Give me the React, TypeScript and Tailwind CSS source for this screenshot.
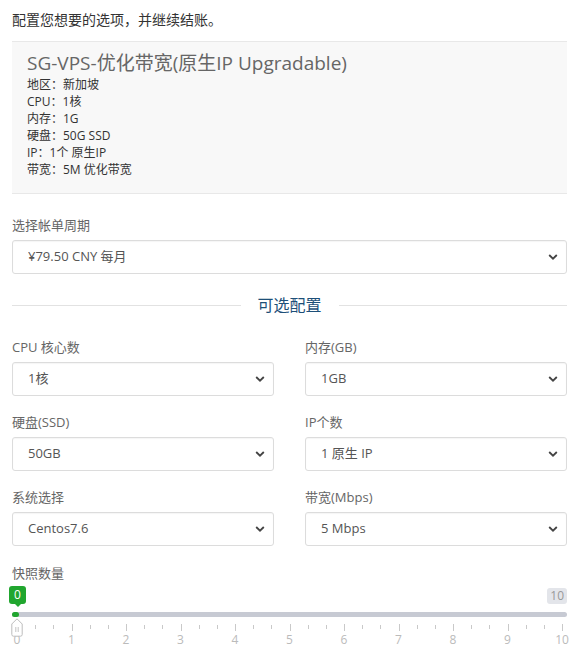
import React, { useState } from "react";

const FONT = {
  fontFamily:
    '"Open Sans", "Noto Sans CJK SC", "Noto Sans", sans-serif',
};

const Chevron = () => (
  <svg
    width="10"
    height="7"
    viewBox="0 0 10 7"
    className="absolute right-[9px] top-1/2 -translate-y-1/2 pointer-events-none"
  >
    <path d="M1.2 1.5 L5 5.2 L8.8 1.5" fill="none" stroke="#444" strokeWidth="1.8" />
  </svg>
);

const SelectBox = ({ value, options }: { value: string; options: string[] }) => {
  const [current, setCurrent] = useState(value);

  return (
    <div className="relative w-full">
      <select
        value={current}
        onChange={(e) => setCurrent(e.target.value)}
        className="appearance-none w-full h-[34px] bg-white border border-[#dcdcdc] rounded-[3px] pl-[15px] pr-8 text-[13px] text-[#555] shadow-[inset_0_1px_1px_rgba(0,0,0,0.04)] outline-none"
        style={FONT}
      >
        {options.map((o) => (
          <option key={o} value={o}>
            {o}
          </option>
        ))}
      </select>
      <Chevron />
    </div>
  );
};

const Field = ({
  label,
  value,
  options,
}: {
  label: string;
  value: string;
  options: string[];
}) => (
  <div className="flex flex-col">
    <div className="h-[18px] leading-[18px] text-[13px] text-[#666] mb-[6px]">
      {label}
    </div>
    <SelectBox value={value} options={options} />
  </div>
);

const SnapshotSlider = () => {
  const max = 10;
  const ticks = Array.from({ length: max * 3 + 1 }, (_, i) => i);

  return (
    <div className="relative h-[77px] w-full">
      {/* value badge */}
      <div className="absolute left-[-3px] top-[4px] flex flex-col items-center">
        <div className="bg-[#21a62f] text-white text-[12px] leading-[18px] w-[17px] text-center rounded-[3px]">
          0
        </div>
        <div className="w-0 h-0 border-l-[3px] border-r-[3px] border-t-[3px] border-l-transparent border-r-transparent border-t-[#21a62f]" />
      </div>
      {/* max badge */}
      <div className="absolute right-0 top-[6px] bg-[#e3e5ea] text-[#999] text-[12px] leading-[16px] px-[3px] rounded-[3px]">
        10
      </div>
      {/* track */}
      <div className="absolute left-0 right-0 top-[30px] h-[5px] rounded-full bg-[#c7cad3]" />
      <div className="absolute left-0 top-[30px] h-[5px] w-[7px] rounded-full bg-[#21a62f]" />
      {/* ticks */}
      <div className="absolute left-[5px] right-[5px] top-[42px] h-[30px]">
        {ticks.map((t) => {
          const major = t % 3 === 0;
          return (
            <div
              key={t}
              className={`absolute w-px bg-[#c9c9c9] ${
                major ? "top-0 h-[7px]" : "top-[1px] h-[4px]"
              }`}
              style={{ left: `${(t / (ticks.length - 1)) * 100}%` }}
            />
          );
        })}
        {Array.from({ length: max + 1 }, (_, i) => i).map((n) => (
          <div
            key={n}
            className="absolute top-[8px] text-[12px] leading-[16px] text-[#bbb] -translate-x-1/2"
            style={{ left: `${(n / max) * 100}%` }}
          >
            {n}
          </div>
        ))}
      </div>
      {/* handle */}
      <svg
        width="12"
        height="19"
        viewBox="0 0 12 19"
        className="absolute left-[-1px] top-[36px]"
      >
        <path
          d="M6 0.8 L11.2 6 L11.2 16.5 Q11.2 18.2 9.5 18.2 L2.5 18.2 Q0.8 18.2 0.8 16.5 L0.8 6 Z"
          fill="#fff"
          stroke="#bdbdbd"
          strokeWidth="1"
        />
        <path d="M4.8 9 V14 M7.2 9 V14" stroke="#c4c4c4" strokeWidth="1" />
      </svg>
    </div>
  );
};

const App = () => {
  return (
    <div
      className="bg-white w-[585px] min-h-[659px] pl-[12px] pr-[18px] pt-[10px] text-[#333]"
      style={FONT}
    >
      <div className="text-[14px] leading-[20px] text-[#333]">
        配置您想要的选项，并继续结账。
      </div>

      <div className="mt-[11px] bg-[#f8f8f8] border-y border-[#e8e8e8] pl-[15px] pt-[9px] pb-[16px] h-[153px]">
        <div className="text-[19px] leading-[24px] text-[#666]">
          SG-VPS-优化带宽(原生IP Upgradable)
        </div>
        <div className="text-[12px] leading-[17px] text-[#333] mt-[1px]">
          <div>地区：新加坡</div>
          <div>CPU：1核</div>
          <div>内存：1G</div>
          <div>硬盘：50G SSD</div>
          <div>IP：1个 原生IP</div>
          <div>带宽：5M 优化带宽</div>
        </div>
      </div>

      <div className="mt-[22px]">
        <Field
          label="选择帐单周期"
          value="¥79.50 CNY 每月"
          options={["¥79.50 CNY 每月", "¥238.50 CNY 每季度", "¥954.00 CNY 每年"]}
        />
      </div>

      <div className="flex items-center gap-[17px] mt-[19px] h-[24px]">
        <div className="flex-1 h-px bg-[#e2e2e2]" />
        <div className="text-[16px] leading-[24px] text-[#1d4f78]">可选配置</div>
        <div className="flex-1 h-px bg-[#e2e2e2]" />
      </div>

      <div className="grid grid-cols-2 gap-x-[31px] gap-y-[17px] mt-[21px]">
        <Field label="CPU 核心数" value="1核" options={["1核", "2核", "4核"]} />
        <Field label="内存(GB)" value="1GB" options={["1GB", "2GB", "4GB"]} />
        <Field label="硬盘(SSD)" value="50GB" options={["50GB", "100GB"]} />
        <Field label="IP个数" value="1 原生 IP" options={["1 原生 IP", "2 原生 IP"]} />
        <Field label="系统选择" value="Centos7.6" options={["Centos7.6", "Debian 10", "Ubuntu 20.04"]} />
        <Field label="带宽(Mbps)" value="5 Mbps" options={["5 Mbps", "10 Mbps"]} />
      </div>

      <div className="mt-[18px]">
        <div className="h-[18px] leading-[18px] text-[13px] text-[#666]">
          快照数量
        </div>
        <SnapshotSlider />
      </div>
    </div>
  );
};

export default App;
